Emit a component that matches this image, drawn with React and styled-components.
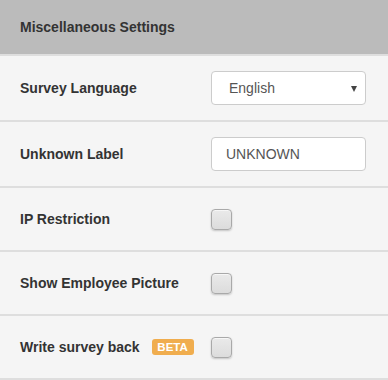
import React from "react";
import styled, { createGlobalStyle } from "styled-components";

const GlobalStyle = createGlobalStyle`
  html, body {
    margin: 0;
    padding: 0;
    background: #f5f5f5;
    font-family: "Liberation Sans", Arial, sans-serif;
  }
`;

const Panel = styled.div`
  width: 388px;
  background: #f5f5f5;
  color: #333;
`;

const Header = styled.div`
  height: 54px;
  display: flex;
  align-items: center;
  padding: 0 20px;
  background: #bbbbbb;
  font-size: 14px;
  font-weight: 700;
  color: #333;
  border-bottom: 2px solid #dedede;
`;

const Row = styled.div`
  display: grid;
  grid-template-columns: 191px 155px;
  align-items: center;
  height: ${(p) => p.$h}px;
  padding-left: 20px;
  border-bottom: 2px solid #dedede;
`;

const Label = styled.label`
  display: flex;
  align-items: center;
  gap: 12px;
  font-size: 14px;
  font-weight: 700;
  color: #333;
`;

const Badge = styled.span`
  display: inline-flex;
  align-items: center;
  justify-content: center;
  height: 16px;
  width: 42px;
  border-radius: 3px;
  background: #f0ad4e;
  color: #fff;
  font-size: 11.5px;
  font-weight: 700;
`;

const Field = styled.div`
  position: relative;
  box-sizing: border-box;
  height: 34px;
  display: flex;
  align-items: center;
  padding-left: ${(p) => (p.$select ? 17 : 14)}px;
  background: #fff;
  border: 1px solid #ccc;
  border-radius: 4px;
  font-size: 14px;
  color: #555;
`;

const Caret = styled.span`
  position: absolute;
  right: 8px;
  top: 14px;
  width: 0;
  height: 0;
  border-left: 3.5px solid transparent;
  border-right: 3.5px solid transparent;
  border-top: 6px solid #444;
`;

const Check = styled.span`
  box-sizing: border-box;
  width: 21px;
  height: 21px;
  border: 1px solid #a9a9a9;
  border-radius: 4px;
  background: linear-gradient(#eaeaea, #dcdcdc);
  box-shadow: 0 1px 2px rgba(0, 0, 0, 0.2), inset 0 1px 0 rgba(255, 255, 255, 0.6);
`;

const rows = [
  { label: "Survey Language", kind: "select", value: "English", h: 64 },
  { label: "Unknown Label", kind: "input", value: "UNKNOWN", h: 64 },
  { label: "IP Restriction", kind: "check", h: 62 },
  { label: "Show Employee Picture", kind: "check", h: 62 },
  { label: "Write survey back", kind: "check", beta: true, h: 62 },
];

export default function App() {
  return (
    <>
      <GlobalStyle />
      <Panel>
        <Header>Miscellaneous Settings</Header>
        {rows.map((r) => (
          <Row key={r.label} $h={r.h}>
            <Label>
              {r.label}
              {r.beta && <Badge>BETA</Badge>}
            </Label>
            {r.kind === "select" && (
              <Field $select>
                {r.value}
                <Caret />
              </Field>
            )}
            {r.kind === "input" && <Field>{r.value}</Field>}
            {r.kind === "check" && <Check />}
          </Row>
        ))}
      </Panel>
    </>
  );
}
